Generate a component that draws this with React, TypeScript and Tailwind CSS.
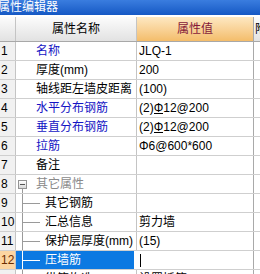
import type { ReactNode } from 'react';

type Row = {
  n: number;
  name: string;
  value?: ReactNode;
  tone?: 'blue' | 'black' | 'gray';
  kind?: 'top' | 'group' | 'child';
  selected?: boolean;
};

const Rebar = () => (
  <span className="inline-block border-b border-black leading-[10px]">Φ</span>
);

const rows: Row[] = [
  { n: 1, name: '名称', value: 'JLQ-1', tone: 'blue' },
  { n: 2, name: '厚度(mm)', value: '200' },
  { n: 3, name: '轴线距左墙皮距离', value: '(100)' },
  {
    n: 4,
    name: '水平分布钢筋',
    value: (
      <>
        (2)
        <Rebar />
        12@200
      </>
    ),
    tone: 'blue',
  },
  {
    n: 5,
    name: '垂直分布钢筋',
    value: (
      <>
        (2)
        <Rebar />
        12@200
      </>
    ),
    tone: 'blue',
  },
  { n: 6, name: '拉筋', value: 'Φ6@600*600', tone: 'blue' },
  { n: 7, name: '备注' },
  { n: 8, name: '其它属性', kind: 'group', tone: 'gray' },
  { n: 9, name: '其它钢筋', kind: 'child' },
  { n: 10, name: '汇总信息', value: '剪力墙', kind: 'child' },
  { n: 11, name: '保护层厚度(mm)', value: '(15)', kind: 'child' },
  { n: 12, name: '压墙筋', kind: 'child', selected: true },
  { n: 13, name: '纵筋构造', value: '设置插筋', kind: 'child' },
];

const toneClass = {
  blue: 'text-[#1414c4]',
  black: 'text-black',
  gray: 'text-[#8a8a8a]',
};

const NameCell = ({ row }: { row: Row }) => {
  const kind = row.kind ?? 'top';
  const line = row.selected ? 'bg-white' : 'bg-[#9a9a9a]';
  const text = row.selected ? 'text-white' : toneClass[row.tone ?? 'black'];

  if (kind === 'group') {
    return (
      <div className="flex h-full w-[121px] shrink-0 items-center border-r border-[#c4c4c4] pl-[2px]">
        <div className="flex h-full w-[9px] flex-col items-center">
          <div className="flex-1" />
          <div className="flex h-[9px] w-[9px] items-center justify-center border border-[#939393] bg-linear-to-b from-white to-[#d8d8d8]">
            <div className="h-px w-[5px] bg-[#555]" />
          </div>
          <div className="w-px flex-1 bg-[#9a9a9a]" />
        </div>
        <span className={`ml-[9px] whitespace-nowrap ${text}`}>{row.name}</span>
      </div>
    );
  }

  if (kind === 'child') {
    return (
      <div
        className={`flex h-full w-[121px] shrink-0 items-center pl-[6px] ${
          row.selected ? 'border-r-[3px] border-white bg-[#0c79e2]' : 'border-r border-[#c4c4c4]'
        }`}
      >
        <div className={`h-full w-px ${line}`} />
        <div className={`h-px w-[17px] ${line}`} />
        <span className={`ml-[5px] whitespace-nowrap ${text}`}>{row.name}</span>
      </div>
    );
  }

  return (
    <div className="flex h-full w-[121px] shrink-0 items-center border-r border-[#c4c4c4] pl-[20px]">
      <span className={`whitespace-nowrap ${text}`}>{row.name}</span>
    </div>
  );
};

export default function App() {
  return (
    <div className="h-[274px] w-[260px] overflow-hidden bg-white font-['Liberation_Sans','Noto_Sans_CJK_SC',sans-serif] text-xs text-black">
      <div className="h-[15px] bg-linear-to-b from-[#3a7ddf] to-[#1558c4] indent-[-2px] leading-[15px] whitespace-nowrap text-white">
        属性编辑器
      </div>
      <div className="h-[2px]" />

      <div className="flex h-[25px] border-b border-[#a8a8a8]">
        <div className="w-[16px] shrink-0 border-r border-[#c4c4c4] bg-linear-to-b from-[#fcfcfc] to-[#e2e2e2]" />
        <div className="flex w-[121px] shrink-0 items-center justify-center border-r border-[#c4c4c4] bg-linear-to-b from-[#fcfcfc] to-[#e2e2e2]">
          属性名称
        </div>
        <div className="flex w-[117px] shrink-0 items-center justify-center border-r border-[#a9a9a9] bg-linear-to-b from-[#fde8c2] to-[#f4bd6a] text-[#861a3a]">
          属性值
        </div>
        <div className="flex min-w-0 flex-1 items-center overflow-hidden bg-linear-to-b from-[#fcfcfc] to-[#e2e2e2] pl-[1px] whitespace-nowrap">
          附加
        </div>
      </div>

      {rows.map((row) => (
        <div key={row.n} className="flex h-[19px] border-b border-[#cfcfcf]">
          <div
            className={`w-[16px] shrink-0 border-r border-[#c4c4c4] pl-[1px] leading-[18px] ${
              row.selected ? 'bg-[#fcd5a2] text-[#6b2c00]' : 'bg-[#f1f1f1]'
            }`}
          >
            {row.n}
          </div>
          <NameCell row={row} />
          <div className="flex w-[117px] shrink-0 items-center border-r border-[#a9a9a9] pl-[2px] whitespace-nowrap">
            {row.selected ? <div className="ml-[1px] h-[13px] w-px bg-black" /> : row.value}
          </div>
          <div className="min-w-0 flex-1" />
        </div>
      ))}
    </div>
  );
}
